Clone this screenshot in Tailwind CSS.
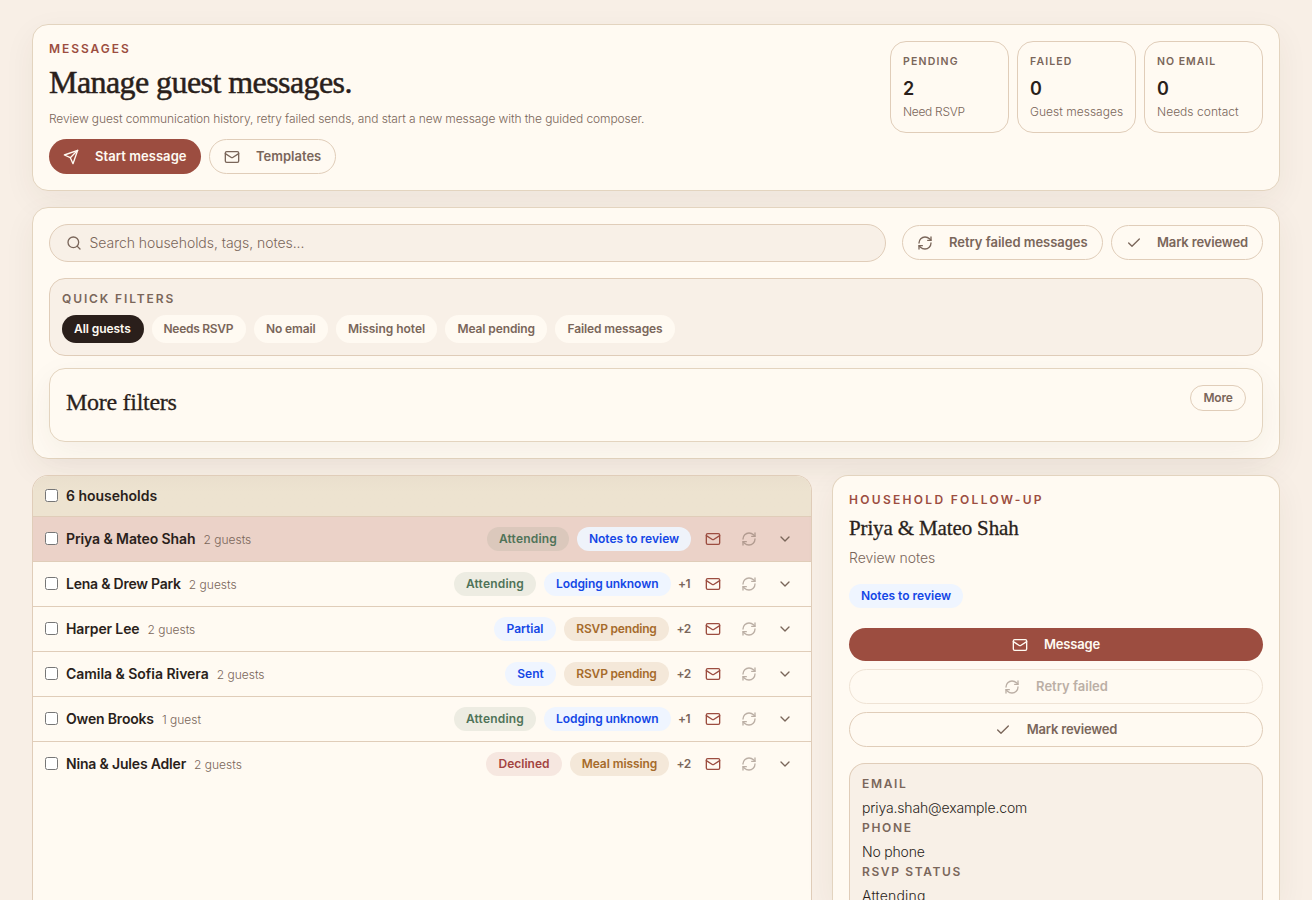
<!DOCTYPE html>
<html lang="en">
<head>
<meta charset="utf-8">
<title>Guest messages</title>
<script src="https://cdn.jsdelivr.net/npm/@tailwindcss/browser@4"></script>
</head>
<body class="h-[900px] overflow-hidden bg-[#f8efe6] px-8 pt-6 font-['Inter',sans-serif] font-light text-[#2a1f1b]">
<svg class="hidden">
  <symbol id="mail" viewBox="0 0 24 24"><rect x="2" y="4" width="20" height="16" rx="2"/><path d="m22 7-8.97 5.7a1.94 1.94 0 0 1-2.06 0L2 7"/></symbol>
  <symbol id="send" viewBox="0 0 24 24"><path d="m22 2-7 20-4-9-9-4Z"/><path d="M22 2 11 13"/></symbol>
  <symbol id="refresh" viewBox="0 0 24 24"><path d="M3 12a9 9 0 0 1 9-9 9.75 9.75 0 0 1 6.74 2.74L21 8"/><path d="M21 3v5h-5"/><path d="M21 12a9 9 0 0 1-9 9 9.75 9.75 0 0 1-6.74-2.74L3 16"/><path d="M8 16H3v5"/></symbol>
  <symbol id="check" viewBox="0 0 24 24"><path d="M20 6 9 17l-5-5"/></symbol>
  <symbol id="search" viewBox="0 0 24 24"><circle cx="11" cy="11" r="8"/><path d="m21 21-4.3-4.3"/></symbol>
  <symbol id="chevron" viewBox="0 0 24 24"><path d="m6 9 6 6 6-6"/></symbol>
</svg>

<header class="flex h-[167px] items-start justify-between rounded-2xl border border-[#e3d4bf] bg-[#fffaf2] p-4 shadow-[0_10px_32px_rgba(65,50,35,0.06)]">
  <div>
    <p class="text-xs leading-4 font-semibold tracking-[1.95px] text-[#9c4d40]">MESSAGES</p>
    <h1 class="mt-1.5 h-[38px] font-['Liberation_Serif',serif] text-[32px] leading-[38px] tracking-[-0.57px] [-webkit-text-stroke:0.5px_#2a1f1b]">Manage guest messages.</h1>
    <p class="mt-2 text-xs leading-5 tracking-[-0.098px] text-[#7a665a]">Review guest communication history, retry failed sends, and start a new message with the guided composer.</p>
    <div class="mt-2.5 flex gap-2 text-[13px] font-semibold">
      <button class="flex h-[35px] w-[152px] items-center gap-4 rounded-full bg-[#9c4d40] pl-3.5 text-[#fffaf2]"><svg class="size-4 fill-none stroke-current stroke-2" stroke-linecap="round" stroke-linejoin="round"><use href="#send"/></svg><span class="tracking-[0.06px]">Start message</span></button>
      <button class="flex h-[35px] w-[127px] items-center gap-4 rounded-full border border-[#e0cdb9] pl-3.5 text-[#7a665a]"><svg class="size-4 fill-none stroke-current stroke-2" stroke-linecap="round" stroke-linejoin="round"><use href="#mail"/></svg>Templates</button>
    </div>
  </div>
  <div class="flex gap-2 whitespace-nowrap text-[#7a665a]">
    <div class="h-[92px] w-[119px] rounded-2xl border border-[#e0cdb9] px-3 pt-3">
      <p class="text-[10.5px] leading-4 font-semibold tracking-[1.2px]">PENDING</p>
      <p class="mt-1 text-lg leading-[30px] font-semibold text-[#2a1f1b]">2</p>
      <p class="text-xs leading-4 tracking-[-0.3px]">Need RSVP</p>
    </div>
    <div class="h-[92px] w-[119px] rounded-2xl border border-[#e0cdb9] px-3 pt-3">
      <p class="text-[10.5px] leading-4 font-semibold tracking-[1.16px]">FAILED</p>
      <p class="mt-1 text-lg leading-[30px] font-semibold text-[#2a1f1b]">0</p>
      <p class="text-xs leading-4 tracking-[0.02px]">Guest messages</p>
    </div>
    <div class="h-[92px] w-[119px] rounded-2xl border border-[#e0cdb9] px-3 pt-3">
      <p class="text-[10.5px] leading-4 font-semibold tracking-[1px]">NO EMAIL</p>
      <p class="mt-1 text-lg leading-[30px] font-semibold text-[#2a1f1b]">0</p>
      <p class="text-xs leading-4 tracking-[0.03px]">Needs contact</p>
    </div>
  </div>
</header>

<section class="mt-4 h-[252px] rounded-2xl border border-[#e3d4bf] bg-[#fffaf2] p-4 text-[#7a665a] shadow-[0_10px_32px_rgba(65,50,35,0.06)]">
  <div class="flex items-start">
    <div class="flex h-[38px] w-[837px] items-center gap-[7.5px] rounded-full border border-[#e0cdb9] bg-[#f8f0e7] pl-4 text-sm"><svg class="size-4 fill-none stroke-current stroke-2" stroke-linecap="round" stroke-linejoin="round"><use href="#search"/></svg><span class="tracking-[-0.044px]">Search households, tags, notes...</span></div>
    <button class="mt-px ml-4 flex h-[35px] w-[201px] items-center gap-4 rounded-full border border-[#e0cdb9] pl-3.5 text-[13px] font-semibold"><svg class="size-4 fill-none stroke-current stroke-2" stroke-linecap="round" stroke-linejoin="round"><use href="#refresh"/></svg><span class="pt-px tracking-[-0.025px]">Retry failed messages</span></button>
    <button class="mt-px ml-2 flex h-[35px] w-[152px] items-center gap-4 rounded-full border border-[#e0cdb9] pl-3.5 text-[13px] font-semibold"><svg class="size-4 fill-none stroke-current stroke-2" stroke-linecap="round" stroke-linejoin="round"><use href="#check"/></svg><span class="-ml-px pt-px tracking-[-0.15px]">Mark reviewed</span></button>
  </div>
  <div class="mt-4 h-[78px] rounded-2xl border border-[#e0cdb9] bg-[#f8f0e7] px-3 pt-3">
    <p class="text-xs leading-4 font-semibold tracking-[1.89px]">QUICK FILTERS</p>
    <div class="mt-2 flex gap-2 text-xs font-semibold whitespace-nowrap">
      <span class="flex h-7 w-[82px] items-center rounded-full bg-[#2a1f1b] pl-3 tracking-[-0.06px] text-[#fffaf2]">All guests</span>
      <span class="flex h-7 w-[94px] items-center rounded-full bg-[#fffaf2] pl-[11.5px] tracking-[-0.28px]">Needs RSVP</span>
      <span class="flex h-7 w-[74px] items-center rounded-full bg-[#fffaf2] pl-3 tracking-[-0.11px]">No email</span>
      <span class="flex h-7 w-[101px] items-center rounded-full bg-[#fffaf2] pl-3 tracking-[-0.02px]">Missing hotel</span>
      <span class="flex h-7 w-[102px] items-center rounded-full bg-[#fffaf2] pl-[12.5px] tracking-[-0.11px]">Meal pending</span>
      <span class="flex h-7 w-[120px] items-center rounded-full bg-[#fffaf2] pl-[12.5px] tracking-[-0.12px]">Failed messages</span>
    </div>
  </div>
  <div class="mt-3 flex h-[74px] items-start justify-between rounded-2xl border border-[#e3d4bf] bg-[#fffaf2] p-4 shadow-[0_10px_32px_rgba(65,50,35,0.06)]">
    <h2 class="font-['Liberation_Serif',serif] text-2xl leading-[34px] tracking-[-0.28px] text-[#2a1f1b] [-webkit-text-stroke:0.3px_#2a1f1b]">More filters</h2>
    <button class="flex h-[26px] w-14 items-center justify-center rounded-full border border-[#e0cdb9] text-xs font-semibold tracking-[-0.2px]">More</button>
  </div>
</section>

<main class="mt-4 flex gap-5">
  <section class="h-[425px] w-[780px] overflow-hidden rounded-t-2xl border border-b-0 border-[#e0cdb9] bg-[#fffaf2]">
    <div class="flex h-[41px] items-center gap-2 border-b border-[#e0cdb9] bg-linear-to-b from-[#eadfcd] to-[#ede3d0] to-40% px-3 text-sm font-semibold"><input type="checkbox" class="mb-0.5 size-[13px]"><span class="tracking-[-0.02px]">6 households</span></div>
    <div id="rows"></div>
  </section>

  <aside class="h-[425px] w-[448px] rounded-t-2xl border border-b-0 border-[#e3d4bf] bg-[#fffaf2] px-4 pt-4 shadow-[0_10px_32px_rgba(65,50,35,0.06)]">
    <p class="text-xs leading-4 font-semibold tracking-[2.3px] text-[#9c4d40]">HOUSEHOLD FOLLOW-UP</p>
    <h2 class="mt-1.5 font-['Liberation_Serif',serif] text-[21px] leading-7 tracking-[-0.14px] [-webkit-text-stroke:0.3px_#2a1f1b]">Priya &amp; Mateo Shah</h2>
    <p class="mt-1.5 text-sm leading-5 tracking-[-0.04px] text-[#7a665a]">Review notes</p>
    <span class="mt-4 flex h-6 w-[114px] items-center justify-center rounded-full bg-[#eff5ff] text-xs font-semibold text-blue-700">Notes to review</span>
    <div class="mt-5 flex flex-col gap-2 text-[13px] font-semibold text-[#7a665a]">
      <button class="flex h-[33px] items-center justify-center gap-4 rounded-full bg-[#9c4d40] text-[#fffaf2]"><svg class="size-4 fill-none stroke-current stroke-2" stroke-linecap="round" stroke-linejoin="round"><use href="#mail"/></svg><span class="tracking-[-0.2px]">Message</span></button>
      <button class="flex h-[35px] items-center justify-center gap-4 rounded-full border border-[#e0cdb9] opacity-50"><svg class="size-4 fill-none stroke-current stroke-2" stroke-linecap="round" stroke-linejoin="round"><use href="#refresh"/></svg>Retry failed</button>
      <button class="flex h-[35px] items-center justify-center gap-4 rounded-full border border-[#e0cdb9]"><svg class="size-4 fill-none stroke-current stroke-2" stroke-linecap="round" stroke-linejoin="round"><use href="#check"/></svg><span class="tracking-[-0.187px]">Mark reviewed</span></button>
    </div>
    <dl class="mt-4 h-[137px] rounded-t-2xl border border-b-0 border-[#e0cdb9] bg-[#f8f0e7] px-3 pt-3 text-sm [&_dt]:h-[22px] [&_dt]:text-xs [&_dt]:leading-4 [&_dt]:font-semibold [&_dt]:text-[#7a665a] [&_dd]:h-[22px] [&_dd]:leading-[20px]">
      <dt class="tracking-[1.68px]">EMAIL</dt><dd class="tracking-[-0.15px]">priya.shah@example.com</dd>
      <dt class="tracking-[1.68px]">PHONE</dt><dd class="tracking-[-0.2px]">No phone</dd>
      <dt class="tracking-[1.62px]">RSVP STATUS</dt><dd class="tracking-[0.19px]">Attending</dd>
    </dl>
  </aside>
</main>

<script>
const pills = {
  'Attending': 'w-[82px] bg-[#4f7358]/10 text-[#4f7358] tracking-[0.2px]',
  'Notes to review': 'w-[114px] bg-blue-50/90 text-blue-700',
  'Lodging unknown': 'w-[126.5px] bg-[#eff5ff] text-blue-700 tracking-[-0.08px]',
  'Partial': 'w-[62px] bg-[#eff5ff] text-blue-700',
  'Sent': 'w-[51px] bg-[#eff5ff] text-blue-700',
  'RSVP pending': 'w-[105px] bg-[#a66b2b]/12 text-[#a66b2b] tracking-[-0.18px]',
  'Meal missing': 'w-[99px] bg-[#a66b2b]/12 text-[#a66b2b] tracking-[-0.08px]',
  'Declined': 'w-[76px] bg-[#a34440]/10 text-[#a34440]'
};
const rows = [
  ['Priya & Mateo Shah', '2 guests', ['Attending', 'Notes to review'], '', 'tracking-[-0.1px]'],
  ['Lena & Drew Park', '2 guests', ['Attending', 'Lodging unknown'], '+1', 'tracking-[-0.23px]'],
  ['Harper Lee', '2 guests', ['Partial', 'RSVP pending'], '+2', 'tracking-[-0.13px]'],
  ['Camila & Sofia Rivera', '2 guests', ['Sent', 'RSVP pending'], '+2', 'tracking-[-0.04px]'],
  ['Owen Brooks', '1 guest', ['Attending', 'Lodging unknown'], '+1', 'tracking-[-0.18px]'],
  ['Nina & Jules Adler', '2 guests', ['Declined', 'Meal missing'], '+2', 'tracking-[-0.18px]']
];
const icon = (id, cls) => `<span class="flex size-7 items-center justify-center ${cls}"><svg class="size-4 fill-none stroke-current stroke-2" stroke-linecap="round" stroke-linejoin="round"><use href="#${id}"/></svg></span>`;
document.getElementById('rows').innerHTML = rows.map(([n, g, p, more, tr], i) => `
  <div class="flex items-center gap-2 px-3 ${i < 5 ? 'h-[45px] border-b border-[#e0cdb9]' : 'h-[44px]'} ${i === 0 ? 'bg-[#ebd2c8]' : ''}">
    <input type="checkbox" class="mb-0.5 size-[13px]">
    <span class="text-sm font-semibold ${tr}">${n.replace('&', '&amp;')}</span>
    <span class="mr-auto pt-0.5 text-xs text-[#7a665a]">${g}</span>
    ${p.map(x => `<span class="flex h-6 items-center justify-center rounded-full text-xs font-semibold whitespace-nowrap ${pills[x]}">${x}</span>`).join('')}
    ${more ? `<span class="${more === '+1' ? 'w-[12.5px]' : 'w-3.5'} text-xs font-semibold tracking-[-0.5px] whitespace-nowrap text-[#7a665a]"><span class="-ml-[0.5px]">${more}</span></span>` : ''}
    ${icon('mail', 'text-[#9c4d40]')}${icon('refresh', 'text-[#7a665a] opacity-50')}${icon('chevron', 'text-[#7a665a]')}
  </div>`).join('');
</script>
</body>
</html>
